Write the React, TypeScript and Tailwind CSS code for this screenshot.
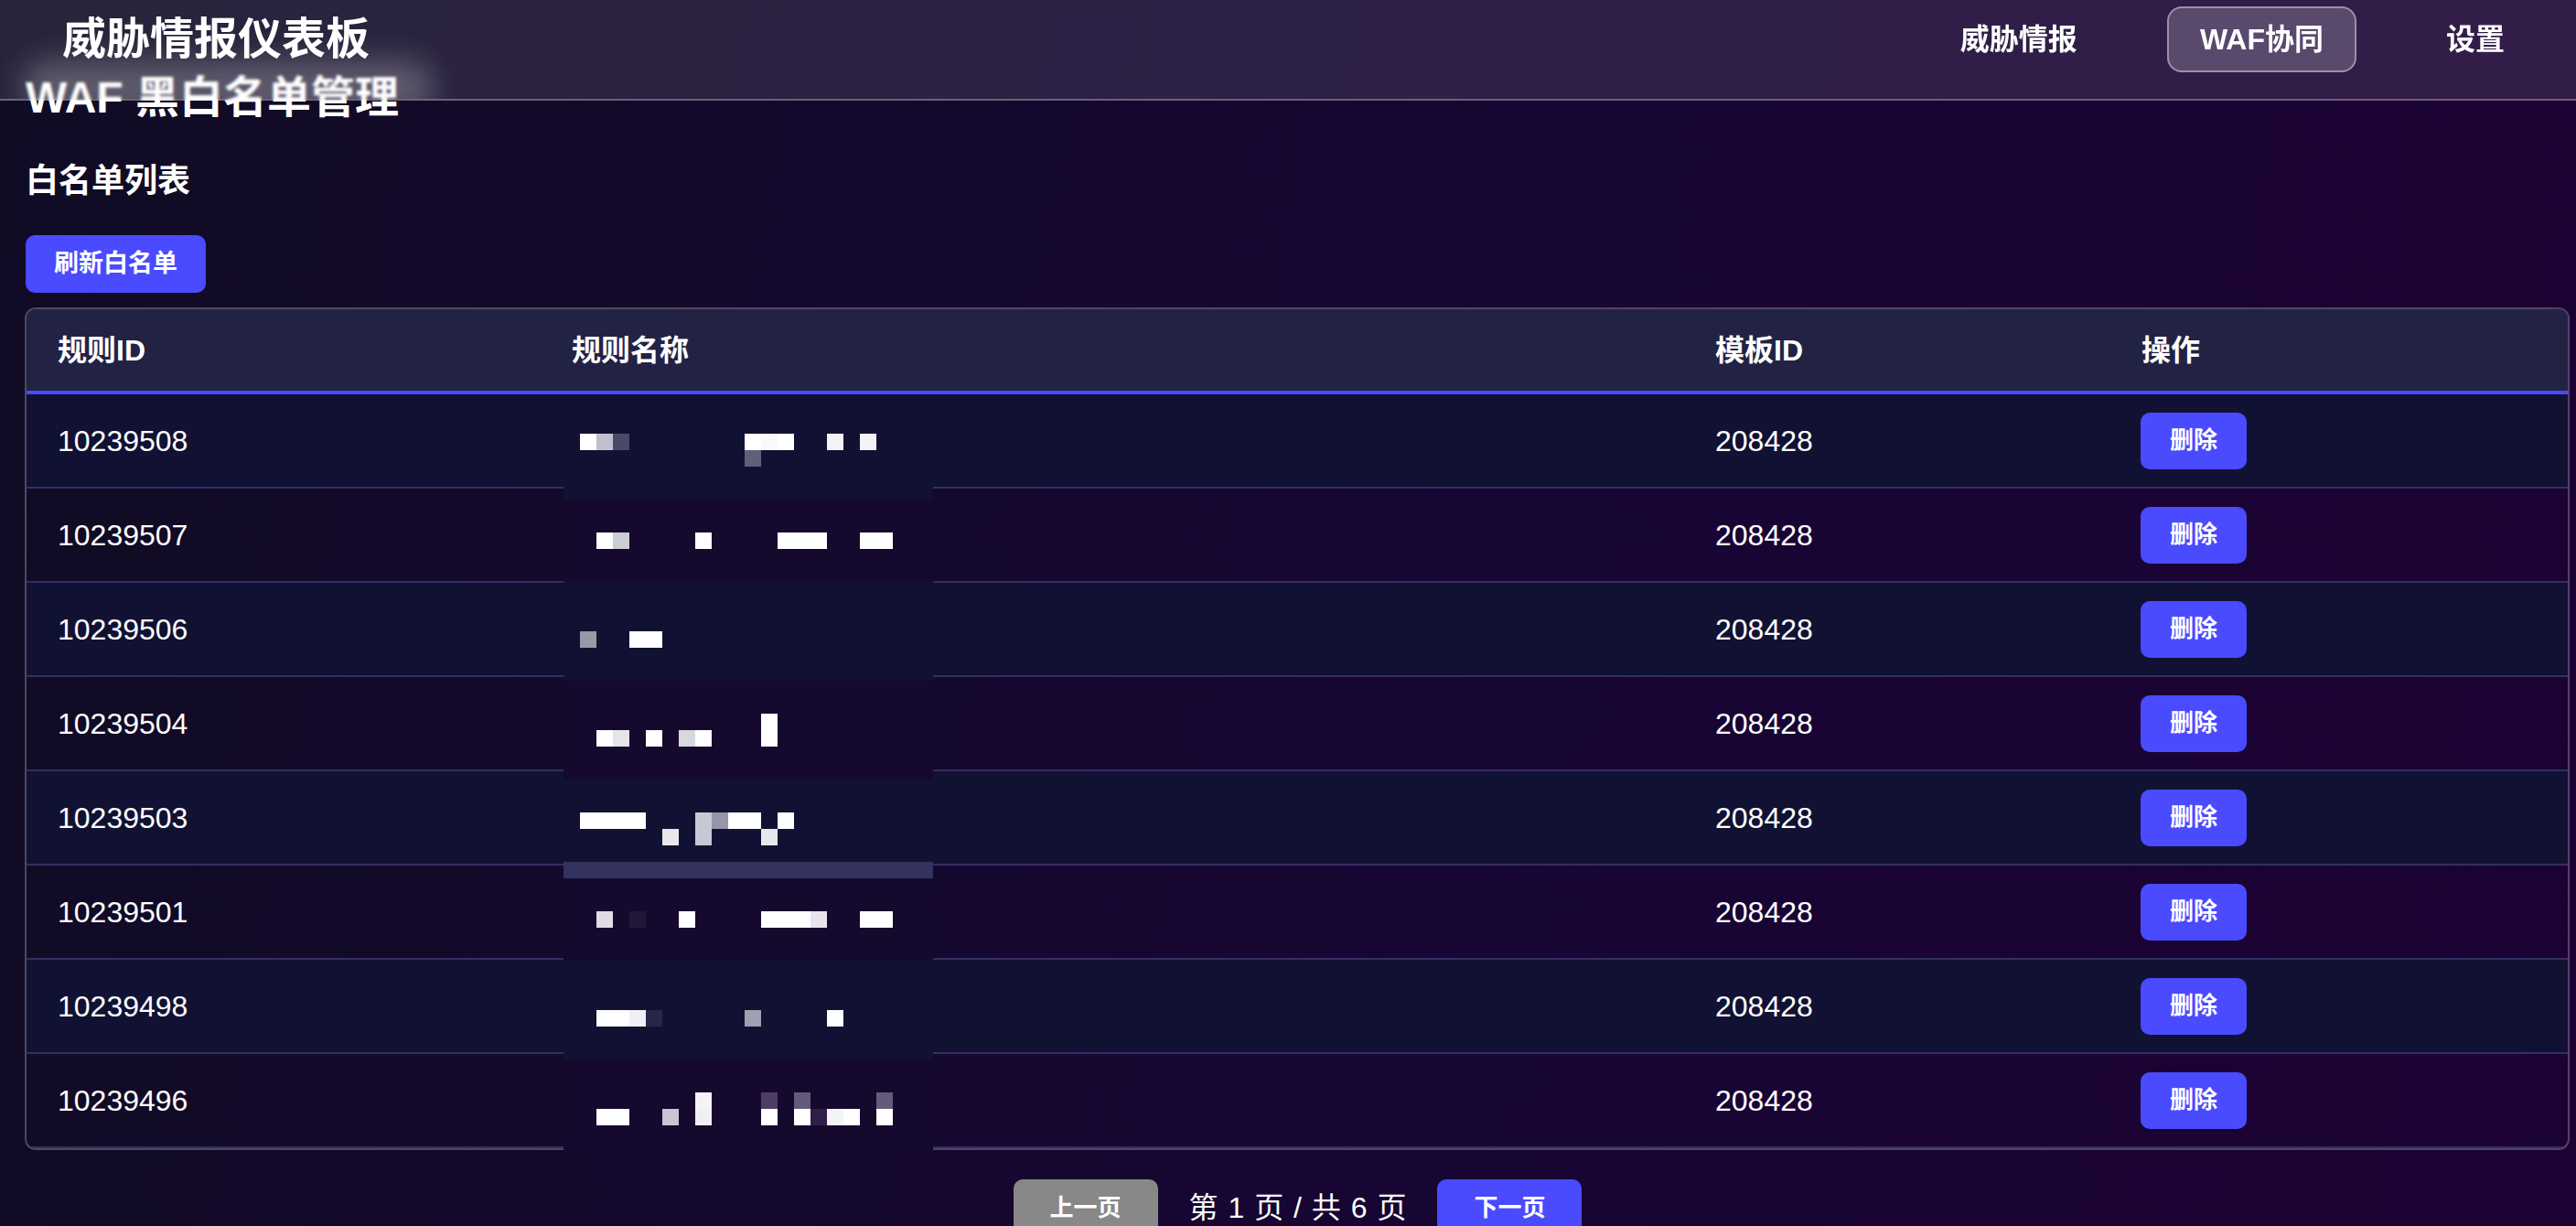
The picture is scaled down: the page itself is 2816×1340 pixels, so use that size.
import React from 'react';

const NAVY = '#111233';
const PURPLE = '#150a2e';

type Block = [number, number, number, string];

const bands: [number, number, string][] = [
  [0, 114, NAVY],
  [114, 204, PURPLE],
  [204, 312, NAVY],
  [312, 420, PURPLE],
  [420, 510, NAVY],
  [510, 528, '#34325f'],
  [528, 618, PURPLE],
  [618, 726, NAVY],
  [726, 834, PURPLE],
];

const blocks: Block[] = [
  [18, 42, 18, '#ffffff'], [36, 42, 18, '#c0c0cc'], [54, 42, 18, '#4a4a68'], [198, 42, 18, '#ffffff'], [216, 42, 18, '#fafafa'], [234, 42, 18, '#ffffff'], [288, 42, 18, '#f3f3f7'], [324, 42, 18, '#f3f3f7'], [198, 60, 18, '#606078'],
  [36, 150, 18, '#ffffff'], [54, 150, 18, '#ccccd4'], [144, 150, 18, '#ffffff'], [234, 150, 54, '#ffffff'], [324, 150, 36, '#ffffff'],
  [18, 258, 18, '#9898a8'], [72, 258, 36, '#ffffff'],
  [216, 348, 18, '#ffffff'], [36, 366, 18, '#ffffff'], [54, 366, 18, '#e4e4ea'], [90, 366, 18, '#ffffff'], [126, 366, 18, '#d8d8e0'], [144, 366, 18, '#ffffff'], [216, 366, 18, '#ffffff'],
  [18, 456, 72, '#ffffff'], [144, 456, 18, '#c8c8d4'], [162, 456, 18, '#9696a8'], [180, 456, 36, '#ffffff'], [234, 456, 18, '#ffffff'], [108, 474, 18, '#e8e8ec'], [144, 474, 18, '#c8c8d4'], [216, 474, 18, '#e8e8ec'],
  [36, 564, 18, '#e0dce6'], [72, 564, 18, '#201838'], [126, 564, 18, '#ffffff'], [216, 564, 54, '#ffffff'], [270, 564, 18, '#e8e4ee'], [324, 564, 36, '#ffffff'],
  [36, 672, 36, '#ffffff'], [72, 672, 18, '#f0f0f4'], [90, 672, 18, '#262648'], [198, 672, 18, '#a0a0b0'], [288, 672, 18, '#ffffff'],
  [144, 762, 18, '#f4f4f8'], [216, 762, 18, '#4e3e66'], [252, 762, 18, '#665a7a'], [342, 762, 18, '#665a7a'],
  [36, 780, 36, '#ffffff'], [108, 780, 18, '#c8c4d4'], [144, 780, 18, '#f0f0f4'], [216, 780, 18, '#ffffff'], [252, 780, 18, '#ffffff'], [270, 780, 18, '#2e1e48'], [288, 780, 18, '#f4f4f8'], [306, 780, 18, '#ffffff'], [342, 780, 18, '#ffffff'],
];

const rows = ['10239508', '10239507', '10239506', '10239504', '10239503', '10239501', '10239498', '10239496'];

function Mosaic() {
  return (
    <svg
      className="absolute left-[589px] top-[96px] pointer-events-none"
      width={404}
      height={834}
      viewBox="0 0 404 834"
      shapeRendering="crispEdges"
    >
      {bands.map(([a, b, c], i) => (
        <rect key={'b' + i} x={0} y={a} width={404} height={b - a} fill={c} />
      ))}
      {blocks.map(([x, y, w, c], i) => (
        <rect key={'k' + i} x={x} y={y} width={w} height={18} fill={c} />
      ))}
    </svg>
  );
}

export default function App() {
  return (
    <div className="min-h-screen w-full bg-[linear-gradient(100deg,#100c24_0%,#170633_55%,#1c0234_100%)] text-white font-['Liberation_Sans','Noto_Sans_CJK_SC',sans-serif]">
      <header className="fixed top-0 left-0 right-0 z-10 h-[110px] overflow-hidden bg-white/10 backdrop-blur-[1.5px] border-b-2 border-white/30 flex items-start justify-between pl-[68px] pr-[42px] pt-[7px]">
        <div className="absolute left-[24px] top-[66px] w-[450px] h-[60px] rounded-full bg-white/25 blur-[16px] pointer-events-none" />
        <div className="relative h-[72px] flex items-center text-[48px] font-bold">威胁情报仪表板</div>
        <nav className="relative flex items-center gap-[62px]">
          <div className="h-[72px] px-[34px] flex items-center text-[32px] font-semibold border-2 border-transparent rounded-[16px]">威胁情报</div>
          <div className="h-[72px] px-[34px] flex items-center text-[32px] font-semibold border-2 border-white/40 bg-white/20 rounded-[16px]">WAF协同</div>
          <div className="h-[72px] px-[34px] flex items-center text-[32px] font-semibold border-2 border-transparent rounded-[16px]">设置</div>
        </nav>
      </header>

      <main className="pl-[28px] pr-[7px] pb-[40px] flex flex-col">
        <h1 className="mt-[71px] leading-[72px] text-[48px] font-bold">WAF 黑白名单管理</h1>
        <h2 className="mt-[28px] leading-[54px] text-[36px] font-bold">白名单列表</h2>
        <div className="mt-[32px]">
          <button className="h-[63px] px-[31px] rounded-[10px] bg-[#4a4aff] text-[27px] font-semibold text-white">刷新白名单</button>
        </div>

        <div className="relative mt-[16px] -ml-[1px]">
          <div className="rounded-[12px] border-2 border-white/25 overflow-hidden">
            <div className="grid grid-cols-[562px_1250px_466px_1fr] h-[93px] bg-[#222244] border-b-4 border-[#4a4aff] text-[32px] font-bold">
              <div className="pl-[34px] flex items-center">规则ID</div>
              <div className="pl-[34px] flex items-center">规则名称</div>
              <div className="pl-[34px] flex items-center">模板ID</div>
              <div className="pl-[34px] flex items-center">操作</div>
            </div>
            {rows.map((id, i) => (
              <div
                key={id}
                className={
                  'grid grid-cols-[562px_1250px_466px_1fr] h-[103px] border-b-2 border-[#332e62] text-[32px] ' +
                  (i % 2 === 0 ? 'bg-[#111233]' : 'bg-transparent')
                }
              >
                <div className="pl-[34px] flex items-center">{id}</div>
                <div className="pl-[34px] flex items-center"></div>
                <div className="pl-[34px] flex items-center">208428</div>
                <div className="pl-[33px] flex items-center">
                  <button className="h-[62px] px-[32px] rounded-[10px] bg-[#4a4aff] text-[26px] font-semibold text-white">删除</button>
                </div>
              </div>
            ))}
          </div>
          <Mosaic />
        </div>

        <div className="mt-[32px] flex items-center justify-center gap-[34px]">
          <button className="h-[62px] px-[40px] rounded-[10px] bg-[#888888] text-[26px] font-semibold text-white">上一页</button>
          <span className="text-[32px] [word-spacing:2px]">第 1 页 / 共 6 页</span>
          <button className="h-[62px] px-[40px] rounded-[10px] bg-[#4a4aff] text-[26px] font-semibold text-white">下一页</button>
        </div>
      </main>
    </div>
  );
}
